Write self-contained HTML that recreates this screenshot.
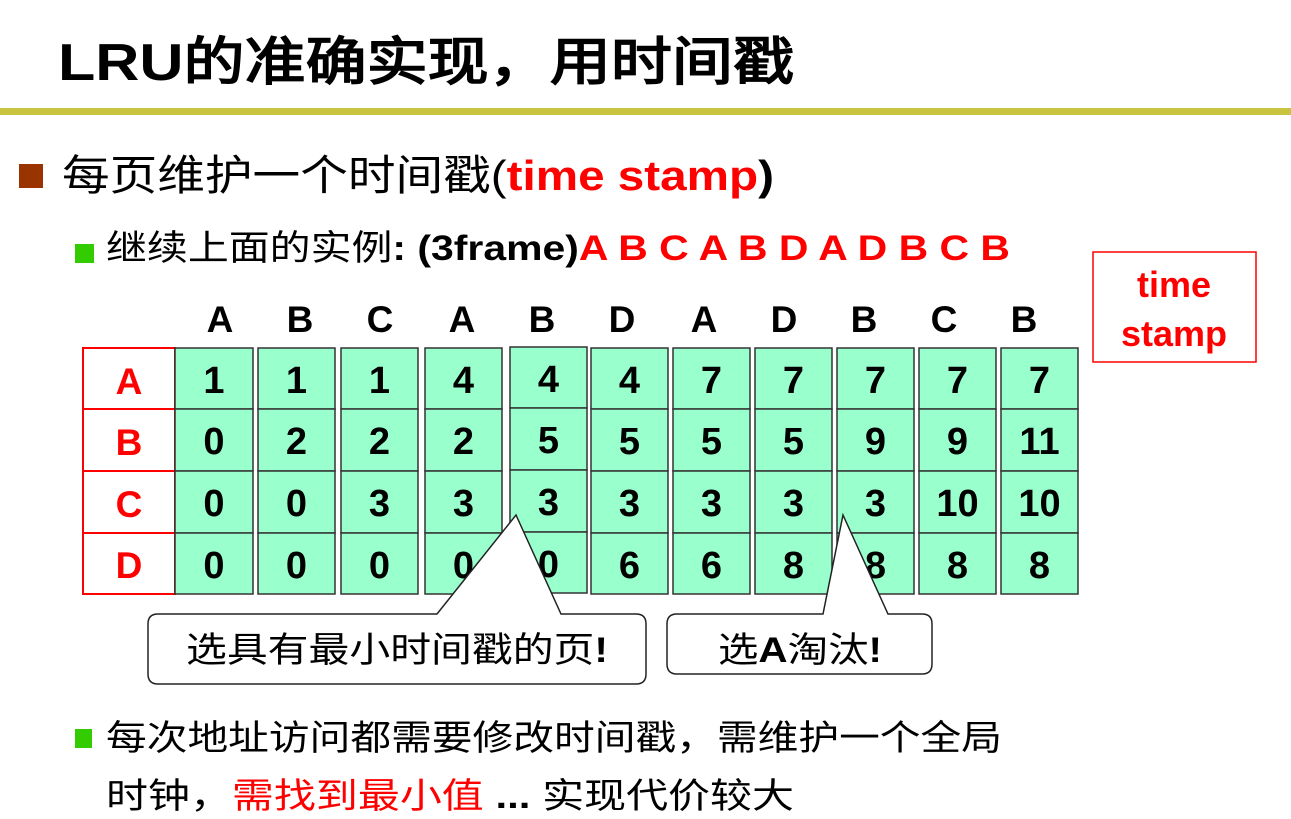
<!DOCTYPE html>
<html><head><meta charset="utf-8"><style>
body{margin:0;background:#fff;}
svg{display:block}
text{font-family:"Liberation Sans","WenQuanYi Zen Hei",sans-serif;}
</style></head><body>
<svg width="1291" height="819" viewBox="0 0 1291 819" xmlns="http://www.w3.org/2000/svg">
<text x="58" y="80" font-size="52" font-weight="bold" textLength="736" lengthAdjust="spacingAndGlyphs">LRU的准确实现，用时间戳</text>
<rect x="0" y="108" width="1291" height="7" fill="#c8c43f"/>
<rect x="19" y="164" width="24" height="24" fill="#993300"/>
<text x="62" y="190" font-size="42" textLength="712" lengthAdjust="spacingAndGlyphs">每页维护一个时间戳(<tspan fill="#ff0000" font-weight="bold">time stamp</tspan><tspan font-weight="bold">)</tspan></text>
<rect x="75" y="244" width="19" height="19" fill="#33cc00"/>
<text x="106" y="260" font-size="35" textLength="904" lengthAdjust="spacingAndGlyphs">继续上面的实例<tspan font-weight="bold">: (3frame)</tspan><tspan fill="#ff0000" font-weight="bold">A B C A B D A D B C B</tspan></text>
<rect x="1093" y="252" width="163" height="110" fill="#fff" stroke="#ff0000" stroke-width="1.5"/>
<text x="1174" y="297" font-size="36" font-weight="bold" fill="#ff0000" text-anchor="middle">time</text>
<text x="1174" y="346" font-size="36" font-weight="bold" fill="#ff0000" text-anchor="middle">stamp</text>
<g font-size="37" font-weight="bold" text-anchor="middle">
<text x="220" y="332">A</text><text x="300" y="332">B</text><text x="380" y="332">C</text><text x="462" y="332">A</text><text x="542" y="332">B</text><text x="622" y="332">D</text><text x="704" y="332">A</text><text x="784" y="332">D</text><text x="864" y="332">B</text><text x="944" y="332">C</text><text x="1024" y="332">B</text>
</g>
<g fill="#fff" stroke="#ff0000" stroke-width="2">
<rect x="83" y="348" width="92" height="61"/><rect x="83" y="409" width="92" height="62"/><rect x="83" y="471" width="92" height="62"/><rect x="83" y="533" width="92" height="61"/>
</g>
<g font-size="37" font-weight="bold" fill="#ff0000" text-anchor="middle">
<text x="129" y="394">A</text><text x="129" y="455">B</text><text x="129" y="517">C</text><text x="129" y="578">D</text>
</g>
<g id="cells" fill="#99ffcc" stroke="#333" stroke-width="1.5"></g>
<g id="nums" font-size="38" font-weight="bold" text-anchor="middle"></g>
<g fill="#fff" stroke="#222" stroke-width="1.5">
<path d="M158 614 H437 L516 515 L561 614 H636 Q646 614 646 624 V674 Q646 684 636 684 H158 Q148 684 148 674 V624 Q148 614 158 614 Z"/>
<path d="M677 614 H823 L843 515 L888 614 H922 Q932 614 932 624 V664 Q932 674 922 674 H677 Q667 674 667 664 V624 Q667 614 677 614 Z"/>
</g>
<text x="397" y="662" font-size="35" text-anchor="middle" textLength="422" lengthAdjust="spacingAndGlyphs">选具有最小时间戳的页<tspan font-weight="bold">!</tspan></text>
<text x="800" y="662" font-size="35" text-anchor="middle" textLength="164" lengthAdjust="spacingAndGlyphs">选<tspan font-weight="bold">A</tspan>淘汰<tspan font-weight="bold">!</tspan></text>
<rect x="75" y="729" width="17" height="19" fill="#33cc00"/>
<text x="106" y="750" font-size="35" textLength="896" lengthAdjust="spacingAndGlyphs">每次地址访问都需要修改时间戳，需维护一个全局</text>
<text x="106" y="808" font-size="35" textLength="688" lengthAdjust="spacingAndGlyphs">时钟，<tspan fill="#ff0000">需找到最小值</tspan> <tspan font-weight="bold">...</tspan> 实现代价较大</text>
<script>
(function(){
var xs=[[175,253],[258,335],[341,418],[425,502],[510,587],[591,668],[673,750],[755,832],[837,914],[919,996],[1001,1078]];
var rows=[[348,409],[409,471],[471,533],[533,594]];
var d=[[1,1,1,4,4,4,7,7,7,7,7],[0,2,2,2,5,5,5,5,9,9,11],[0,0,3,3,3,3,3,3,3,10,10],[0,0,0,0,0,6,6,8,8,8,8]];
var ns="http://www.w3.org/2000/svg",c=document.getElementById('cells'),n=document.getElementById('nums');
for(var i=0;i<11;i++)for(var r=0;r<4;r++){var off=i==4?-1:0;
var e=document.createElementNS(ns,'rect');e.setAttribute('x',xs[i][0]);e.setAttribute('y',rows[r][0]+off);e.setAttribute('width',xs[i][1]-xs[i][0]);e.setAttribute('height',rows[r][1]-rows[r][0]);c.appendChild(e);
var t=document.createElementNS(ns,'text');t.setAttribute('x',(xs[i][0]+xs[i][1])/2);t.setAttribute('y',rows[r][0]+off+45);t.textContent=d[r][i];n.appendChild(t);}
})();
</script>
</svg>
</body></html>
